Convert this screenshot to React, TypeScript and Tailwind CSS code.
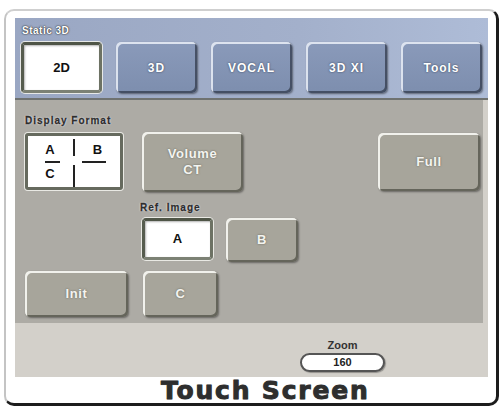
import React from "react";

const blueBtn =
  "flex items-center justify-center w-[81px] h-[51px] rounded-[5px] bg-[linear-gradient(180deg,#8a9aba_0%,#7d8eae_100%)] text-white font-bold text-[12px] tracking-[1px] [text-shadow:0_0_2px_rgba(40,50,70,0.9)] shadow-[inset_2px_2px_0_rgba(235,240,248,0.85),inset_-2px_-2px_0_rgba(50,58,75,0.75),1px_1px_2px_rgba(0,0,0,0.45)]";

const greyBtn =
  "flex items-center justify-center rounded-[5px] bg-[#a7a59b] text-[#f4f4f0] font-bold text-[13px] leading-[16px] tracking-[0.6px] text-center [text-shadow:0_0_2px_rgba(80,80,70,0.8)] shadow-[inset_2px_2px_0_rgba(250,250,245,0.9),inset_-2px_-2px_0_rgba(85,85,75,0.8),1px_1px_2px_rgba(0,0,0,0.4)]";

const pressedBtn =
  "flex items-center justify-center rounded-[4px] bg-white text-[#111] font-bold text-[13px] border-t-[3px] border-l-[3px] border-r-[3px] border-b-[3px] border-t-[#4f5547] border-l-[#565c4e] border-r-[#6d7264] border-b-[#7c8174] shadow-[0_0_0_1px_rgba(240,240,235,0.9),inset_1px_1px_2px_rgba(0,0,0,0.3)]";

const darkLabel =
  "text-[10px] leading-[12px] font-bold text-[#2d2d2d] tracking-[1px] [-webkit-text-stroke:0.3px_#2d2d2d] [text-shadow:0_0_1px_#fff,0_0_2px_#fff]";

function FormatGrid() {
  return (
    <div className="relative w-[98px] h-[57px] mt-[1px] bg-white rounded-[3px] border-[3px] border-[#666a5e] shadow-[0_0_0_1px_rgba(240,240,235,0.9)]">
      <svg
        className="absolute left-[-3px] top-[-3px]"
        width="98"
        height="57"
        viewBox="0 0 98 57"
      >
        <g stroke="#222" strokeWidth="2">
          <line x1="49" y1="6" x2="49" y2="23" />
          <line x1="49" y1="32" x2="49" y2="54" />
          <line x1="20" y1="29" x2="35" y2="29" />
          <line x1="57" y1="29" x2="81" y2="29" />
        </g>
      </svg>
      <div className="relative grid grid-cols-2 grid-rows-2 w-full h-full text-[13px] font-bold text-[#111]">
        <div className="flex items-center justify-center pt-[1px] pr-[2px]">A</div>
        <div className="flex items-center justify-center pt-[1px] pl-[1px]">B</div>
        <div className="flex items-center justify-center pb-[2px] pr-[2px]">C</div>
        <div />
      </div>
    </div>
  );
}

export default function App() {
  return (
    <div
      className="w-[503px] h-[409px] bg-white overflow-hidden"
      style={{ fontFamily: '"Liberation Sans", Arial, sans-serif' }}
    >
      <div className="ml-[4px] mt-[9px] w-[495px] h-[397px] bg-white rounded-[10px] border-l-[2px] border-t-[2px] border-r-[3px] border-b-[3px] border-l-[#c4c4c4] border-t-[#cfcfcf] border-r-[#1c1c1c] border-b-[#1c1c1c] pl-[9px] pt-[7px]">
        <div className="w-[473px] flex flex-col bg-[#d3d0ca]">
          {/* mode selector */}
          <div className="h-[82px] pl-[6px] pt-[7px] bg-[linear-gradient(90deg,#9aa7c3_0%,#a3b0cb_60%,#aebcd7_100%)] border-b-[2px] border-[#6f7270]">
            <div className="h-[12px] text-[10px] leading-[12px] font-bold text-white tracking-[0.5px] [text-shadow:0_0_1px_#222,0_0_2px_#333] pl-[1px]">
              Static 3D
            </div>
            <div className="flex gap-[14px] mt-[5px]">
              <div className={`${pressedBtn} w-[81px] h-[51px]`}>2D</div>
              <div className={blueBtn}>3D</div>
              <div className={blueBtn}>VOCAL</div>
              <div className={blueBtn}>3D XI</div>
              <div className={blueBtn}>Tools</div>
            </div>
          </div>

          {/* display settings */}
          <div className="mr-[5px] bg-[#adaba5] pl-[10px] pt-[15px] pb-[6px]">
            <div className={darkLabel}>Display Format</div>
            <div className="flex items-start mt-[5px]">
              <FormatGrid />
              <div className={`${greyBtn} ml-[19px] w-[101px] h-[60px]`}>
                Volume
                <br />
                CT
              </div>
              <div className={`${greyBtn} ml-auto mr-[3px] mt-[1px] w-[102px] h-[58px]`}>
                Full
              </div>
            </div>
            <div className={`${darkLabel} mt-[10px] pl-[115px]`}>Ref. Image</div>
            <div className="flex items-start gap-[13px] mt-[4px] pl-[117px]">
              <div className={`${pressedBtn} w-[71px] h-[42px]`}>A</div>
              <div className={`${greyBtn} w-[72px] h-[44px]`}>B</div>
            </div>
            <div className="flex gap-[15px] mt-[9px]">
              <div className={`${greyBtn} w-[103px] h-[46px]`}>Init</div>
              <div className={`${greyBtn} w-[75px] h-[46px]`}>C</div>
            </div>
          </div>

          {/* zoom readout */}
          <div className="h-[54px] pl-[285px] pt-[16px]">
            <div className="w-[85px] flex flex-col items-center">
              <div className="text-[11px] leading-[13px] font-bold text-[#333]">Zoom</div>
              <div className="mt-[1px] w-[85px] h-[19px] rounded-full bg-white border-[2px] border-[#555] shadow-[1px_1px_1px_rgba(0,0,0,0.3)] flex items-center justify-center text-[11px] font-bold text-[#222]">
                160
              </div>
            </div>
          </div>
        </div>

        <div className="h-[26px] flex items-center pl-[146px] pt-[2px]">
          <span
            className="text-[25px] leading-[26px] font-bold text-[#2e2e2e] tracking-[1.8px] [-webkit-text-stroke:0.8px_#2e2e2e] [text-shadow:0_0_1px_rgba(0,0,0,0.6)]"
            style={{ fontFamily: '"DejaVu Sans", Verdana, sans-serif' }}
          >
            Touch Screen
          </span>
        </div>
      </div>
    </div>
  );
}
